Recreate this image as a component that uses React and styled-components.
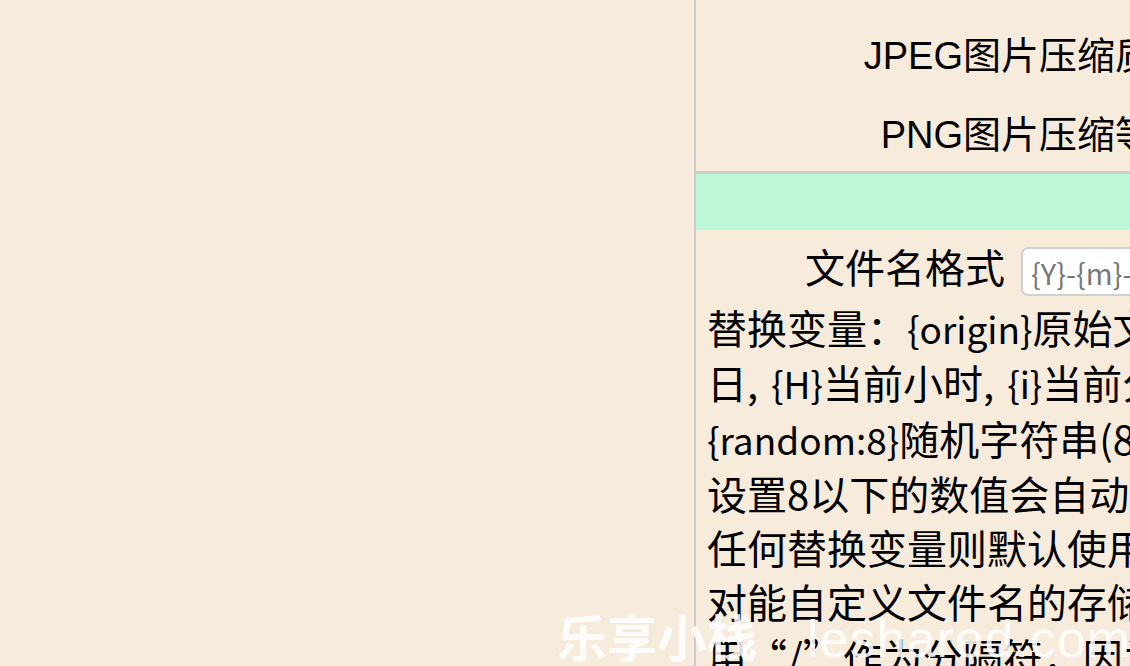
import React from 'react'
import styled, { createGlobalStyle } from 'styled-components'

const GlobalStyle = createGlobalStyle`
  html, body {
    margin: 0;
    padding: 0;
    background: #f7ebdc;
    overflow: hidden;
  }
`

const Page = styled.div`
  position: relative;
  width: 1130px;
  height: 666px;
  display: flex;
  overflow: hidden;
  background: #f7ebdc;
  font-family: "Liberation Sans", "Noto Sans CJK SC", sans-serif;
  color: #000;
`

const Side = styled.div`
  width: 694px;
  flex-shrink: 0;
`

const Panel = styled.div`
  flex-shrink: 0;
  width: 900px;
  border-left: 2px solid #cccccc;
  padding-top: 13px;
`

const OptionRow = styled.div`
  display: grid;
  grid-template-columns: 495px 1fr;
  align-items: center;
  height: 79px;
`

const OptionLabel = styled.div`
  font-size: 38px;
  text-align: right;
  white-space: nowrap;
`

const Band = styled.div`
  border-top: 3px solid #cdcdcd;
  height: 56px;
  background: #bcf7d7;
`

const FormRow = styled.div`
  display: grid;
  grid-template-columns: 309px auto;
  column-gap: 16px;
  align-items: center;
  height: 70px;
`

const FormLabel = styled.label`
  font-family: "Noto Sans CJK SC", sans-serif;
  font-size: 40px;
  text-align: right;
  white-space: nowrap;
  padding-top: 2px;
`

const Input = styled.input`
  box-sizing: border-box;
  width: 400px;
  height: 49px;
  margin-top: 13px;
  padding: 0 8px;
  border: 2px solid #d0d0d0;
  border-radius: 7px;
  background: #fff;
  font-family: "Noto Sans CJK SC", sans-serif;
  font-size: 29px;
  &::placeholder {
    color: #777;
  }
`

const Help = styled.div`
  padding-left: 11px;
  font-family: "Noto Sans CJK SC", sans-serif;
  font-size: 40px;
  line-height: 54.3px;
  word-spacing: 4px;
`

const Line = styled.div`
  white-space: nowrap;
`

const Token = styled.span`
  font-size: 37px;
`

const Watermark = styled.div`
  position: absolute;
  left: 557px;
  top: 602px;
  font-family: "Noto Sans CJK SC", sans-serif;
  font-size: 50px;
  font-weight: 700;
  line-height: 66px;
  color: rgba(255, 255, 255, 0.85);
  white-space: nowrap;
`

const Site = styled.span`
  margin-left: 50px;
  font-family: "Liberation Sans", sans-serif;
  font-size: 52px;
  font-weight: 400;
  letter-spacing: 1px;
`

const helpLines = [
  ['替换变量：', '{origin}', '原始文件名, ', '{Y}', '当前年份'],
  ['日, ', '{H}', '当前小时, ', '{i}', '当前分钟, ', '{s}', '当前秒,'],
  ['', '{random:8}', '随机字符串(8-32位可选),'],
  ['设置8以下的数值会自动按8位处理, 不设置'],
  ['任何替换变量则默认使用随机字符串命名,'],
  ['对能自定义文件名的存储有效, 支持使'],
  ['用“/”作为分隔符，因为会自动创建目录'],
]

const App = () => {
  return (
    <Page>
      <GlobalStyle />
      <Side />
      <Panel>
        <OptionRow>
          <OptionLabel>JPEG图片压缩质量</OptionLabel>
        </OptionRow>
        <OptionRow>
          <OptionLabel>PNG图片压缩等级</OptionLabel>
        </OptionRow>
        <Band />
        <FormRow>
          <FormLabel>文件名格式</FormLabel>
          <Input placeholder="{Y}-{m}-{d}-{random:16}" />
        </FormRow>
        <Help>
          {helpLines.map((parts, i) => (
            <Line key={i}>
              {parts.map((p, j) =>
                j % 2 === 1 ? <Token key={j}>{p}</Token> : <React.Fragment key={j}>{p}</React.Fragment>
              )}
            </Line>
          ))}
        </Help>
      </Panel>
      <Watermark>
        乐享小栈<Site>leshared.com</Site>
      </Watermark>
    </Page>
  )
}

export default App
